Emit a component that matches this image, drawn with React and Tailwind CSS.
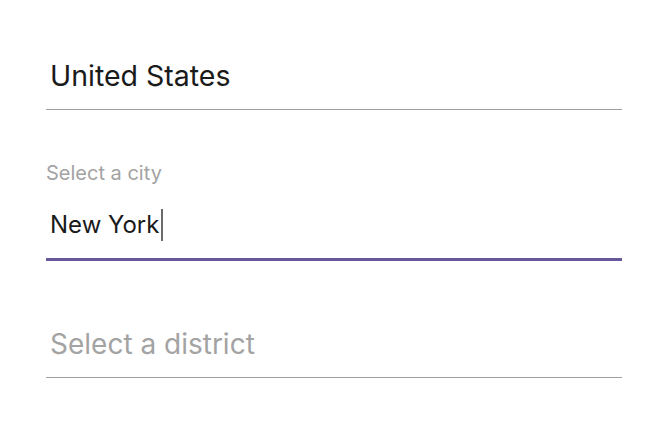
import React from "react";

export default function App() {
  return (
    <div
      className="w-[668px] h-[442px] bg-white overflow-hidden"
      style={{ fontFamily: "Inter, 'Noto Sans', sans-serif" }}
    >
      <div className="ml-[46px] w-[576px] flex flex-col">
        {/* COUNTRY */}
        <div className="mt-[58px] pb-[15px] pl-[4px] border-b border-[#9e9e9e]">
          <div className="text-[28.5px] leading-[36px] text-[#1a1a1a]">United States</div>
        </div>

        {/* CITY (focused) */}
        <div className="mt-[51px] text-[20px] leading-[24px] text-[#a3a3a3]">Select a city</div>
        <div className="mt-[24px] pb-[17px] pl-[4px] border-b-[3px] border-[#67589a]">
          <div className="flex items-center text-[24px] leading-[32px] text-[#1a1a1a]">
            New York
            <span className="inline-block w-[1.5px] h-[32px] bg-[#6b6b6b] ml-[2px]" />
          </div>
        </div>

        {/* DISTRICT */}
        <div className="mt-[65px] pb-[15px] pl-[4px] border-b border-[#9e9e9e]">
          <div className="text-[28px] leading-[36px] text-[#a3a3a3]">Select a district</div>
        </div>
      </div>
    </div>
  );
}
